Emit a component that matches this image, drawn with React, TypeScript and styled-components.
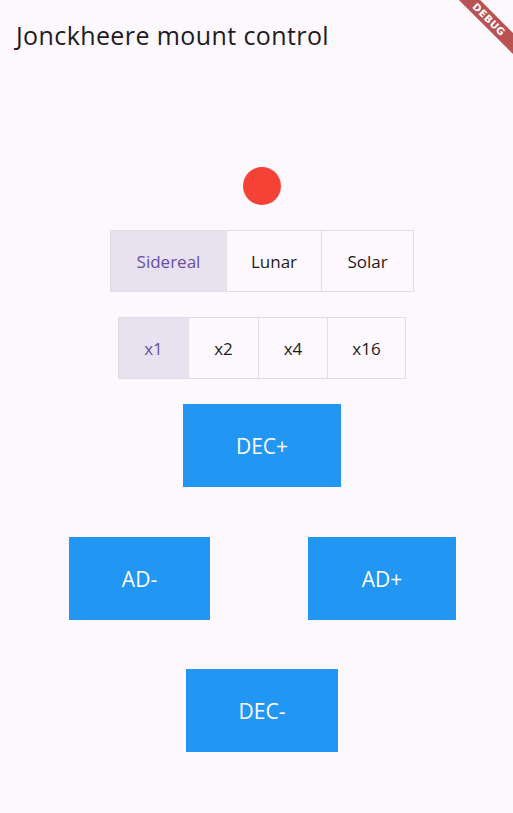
import * as React from "react";
import styled, { createGlobalStyle } from "styled-components";

const GlobalStyle = createGlobalStyle`
  html, body {
    margin: 0;
    padding: 0;
    background: #fdf7fe;
  }
  body {
    font-family: "Open Sans", "Noto Sans", sans-serif;
    color: #1d1b20;
  }
`;

const Page = styled.div`
  position: relative;
  width: 513px;
  height: 813px;
  overflow: hidden;
  background: #fdf7fe;
`;

const Header = styled.header`
  height: 72px;
  display: flex;
  align-items: center;
  padding: 0 16px;
  box-sizing: border-box;
`;

const Title = styled.h1`
  margin: 0 0 2px 0;
  font-size: 25px;
  font-weight: 400;
  letter-spacing: 0.4px;
  color: #1d1b20;
`;

const Body = styled.main`
  display: flex;
  flex-direction: column;
  align-items: center;
  padding-left: 11px;
`;

const StatusDot = styled.div`
  width: 38px;
  height: 38px;
  border-radius: 50%;
  background: #f44336;
  margin-top: 95px;
`;

const Segmented = styled.div`
  display: flex;
  margin-top: 25px;
  border: 1px solid #e2dce3;
  height: 62px;
  box-sizing: border-box;
`;

const Segment = styled.button<{ $selected?: boolean; $width: number }>`
  width: ${(p) => p.$width}px;
  border: none;
  border-left: 1px solid #e2dce3;
  background: ${(p) => (p.$selected ? "#e8e1ef" : "#fdf7fe")};
  color: ${(p) => (p.$selected ? "#6650a4" : "#1d1b20")};
  font-family: inherit;
  font-size: 17px;
  padding: 0;
  cursor: pointer;

  &:first-child {
    border-left: none;
  }
`;

const Row = styled.div`
  display: flex;
  align-self: stretch;
  padding-left: 58px;
  gap: 98px;
  margin-top: 50px;
`;

const MoveButton = styled.button<{ $width: number; $gap?: number }>`
  width: ${(p) => p.$width}px;
  height: 83px;
  margin-top: ${(p) => p.$gap ?? 0}px;
  border: none;
  background: #2196f3;
  color: #ffffff;
  font-family: inherit;
  font-size: 21px;
  cursor: pointer;
`;

const Ribbon = styled.div`
  position: absolute;
  top: 12px;
  right: -24px;
  width: 96px;
  height: 15px;
  transform: rotate(45deg);
  background: rgba(168, 40, 40, 0.8);
  color: #fff;
  font-family: "DejaVu Sans", sans-serif;
  font-weight: 700;
  font-size: 10px;
  letter-spacing: 0.5px;
  display: flex;
  align-items: center;
  justify-content: center;
`;

const rates = [
  { label: "Sidereal", width: 115 },
  { label: "Lunar", width: 95 },
  { label: "Solar", width: 92 },
];

const speeds = [
  { label: "x1", width: 69 },
  { label: "x2", width: 70 },
  { label: "x4", width: 69 },
  { label: "x16", width: 78 },
];

const App = () => {
  const [rate, setRate] = React.useState("Sidereal");
  const [speed, setSpeed] = React.useState("x1");

  return (
    <Page>
      <GlobalStyle />
      <Header>
        <Title>Jonckheere mount control</Title>
      </Header>
      <Body>
        <StatusDot />
        <Segmented>
          {rates.map((r) => (
            <Segment
              key={r.label}
              $width={r.width}
              $selected={rate === r.label}
              onClick={() => setRate(r.label)}
            >
              {r.label}
            </Segment>
          ))}
        </Segmented>
        <Segmented>
          {speeds.map((s) => (
            <Segment
              key={s.label}
              $width={s.width}
              $selected={speed === s.label}
              onClick={() => setSpeed(s.label)}
            >
              {s.label}
            </Segment>
          ))}
        </Segmented>
        <MoveButton $width={158} $gap={25}>DEC+</MoveButton>
        <Row>
          <MoveButton $width={141}>AD-</MoveButton>
          <MoveButton $width={148}>AD+</MoveButton>
        </Row>
        <MoveButton $width={152} $gap={49}>DEC-</MoveButton>
      </Body>
      <Ribbon>DEBUG</Ribbon>
    </Page>
  );
};

export default App;
